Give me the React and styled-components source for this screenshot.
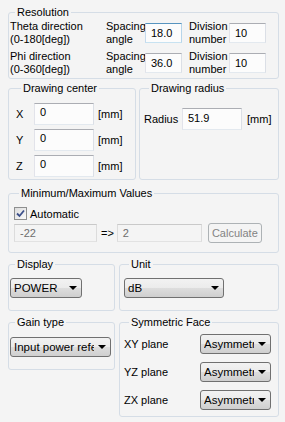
import styled, { createGlobalStyle } from "styled-components";

const GlobalStyle = createGlobalStyle`
  html, body {
    margin: 0;
    padding: 0;
    background: #f4f4f4;
  }
  body {
    font-family: "Liberation Sans", Arial, sans-serif;
    font-size: 11px;
    color: #000;
  }
`;

const Page = styled.div`
  width: 285px;
  box-sizing: border-box;
  padding: 5px 6px 0 8px;
  display: flex;
  flex-direction: column;
`;

const Row = styled.div`
  display: flex;
  gap: ${(p) => p.gap || 0}px;
  margin-top: ${(p) => p.top || 0}px;
  align-items: ${(p) => p.align || "stretch"};
`;

const Group = styled.fieldset`
  box-sizing: border-box;
  margin: 0;
  min-width: 0;
  width: ${(p) => (p.width ? `${p.width}px` : "auto")};
  flex: ${(p) => (p.width ? "none" : "1")};
  margin-top: ${(p) => p.top || 0}px;
  padding: ${(p) => p.pad || "0"};
  border: 1px solid #d5dde6;
  border-radius: 3px;
`;

const Legend = styled.legend`
  padding: 0 2px;
  margin-left: 5px;
  line-height: 15px;
  font-size: 11px;
`;

const ResGrid = styled.div`
  display: grid;
  grid-template-columns: 96px 39px 36px 8px 40px 36px;
  grid-auto-rows: 26px;
  row-gap: 4px;
  align-items: center;
`;

const TwoLine = styled.div`
  line-height: 13px;
  white-space: nowrap;
`;

const Field = styled.div`
  box-sizing: border-box;
  width: ${(p) => p.w}px;
  height: ${(p) => p.h || 20}px;
  border: 1px solid;
  border-color: ${(p) =>
    p.focused
      ? "#5794bf #b7d5ea #c7e2f1 #c5daed"
      : p.disabled
      ? "#c9c9c9 #dcdcdc #e2e2e2 #dcdcdc"
      : "#abadb3 #dbdfe6 #e3e9ef #e2e3ea"};
  background: ${(p) => (p.disabled ? "#f4f4f4" : "#fcfcfc")};
  color: ${(p) => (p.disabled ? "#6d6d6d" : "#000")};
  padding: 0 5px ${(p) => p.lift || 0}px;
  display: flex;
  align-items: center;
  white-space: nowrap;
`;

const FieldRow = styled.div`
  display: flex;
  align-items: center;
  height: ${(p) => p.h || 22}px;
  margin-top: ${(p) => p.top || 0}px;
`;

const Label = styled.span`
  flex: none;
  width: ${(p) => (p.w ? `${p.w}px` : "auto")};
  margin-left: ${(p) => p.ml || 0}px;
  white-space: nowrap;
`;

const Stack = styled.div`
  display: flex;
  flex-direction: column;
  gap: ${(p) => p.gap || 0}px;
`;

const Check = styled.div`
  display: flex;
  align-items: center;
  height: 13px;
  gap: 3px;
`;

const Box = styled.span`
  width: 13px;
  height: 13px;
  box-sizing: border-box;
  border: 1px solid #8e8f8f;
  background: linear-gradient(135deg, #dcdcdc, #fafafa);
  display: flex;
  align-items: center;
  justify-content: center;
`;

const Button = styled.div`
  box-sizing: border-box;
  width: ${(p) => p.w}px;
  height: 20px;
  margin-left: ${(p) => p.ml || 0}px;
  border: 1px solid #adb2b5;
  border-radius: 3px;
  background: #f4f4f4;
  color: #838383;
  display: flex;
  align-items: center;
  justify-content: center;
`;

const Select = styled.div`
  box-sizing: border-box;
  width: ${(p) => p.w}px;
  height: 20px;
  border: 1px solid #707070;
  border-radius: 3px;
  background: linear-gradient(#f2f2f2 0%, #ebebeb 50%, #dddddd 51%, #cfcfcf 100%);
  display: flex;
  align-items: center;
  padding: 0 4px 0 3px;
  font-size: 11.5px;
  overflow: hidden;
`;

const SelectText = styled.span`
  flex: 1;
  overflow: hidden;
  white-space: nowrap;
`;

const Arrow = styled.span`
  flex: none;
  width: 0;
  height: 0;
  margin-left: 4px;
  border-left: 4px solid transparent;
  border-right: 4px solid transparent;
  border-top: 4px solid #000;
`;

const Gap = styled.span`
  display: inline-block;
  width: ${(p) => p.w}px;
`;

function Dropdown({ w, value }) {
  return (
    <Select w={w}>
      <SelectText>{value}</SelectText>
      <Arrow />
    </Select>
  );
}

export default function App() {
  return (
    <>
      <GlobalStyle />
      <Page>
        <Group pad="0 0 2px 1px">
          <Legend>Resolution</Legend>
          <ResGrid>
            <TwoLine>
              Theta direction
              <br />
              (0-180[deg])
            </TwoLine>
            <TwoLine>
              Spacing
              <br />
              angle
            </TwoLine>
            <Field w={37} focused>18.0</Field>
            <span />
            <TwoLine>
              Division
              <br />
              number
            </TwoLine>
            <Field w={37}>10</Field>
            <TwoLine>
              Phi direction
              <br />
              (0-360[deg])
            </TwoLine>
            <TwoLine>
              Spacing
              <br />
              angle
            </TwoLine>
            <Field w={37}>36.0</Field>
            <span />
            <TwoLine>
              Division
              <br />
              number
            </TwoLine>
            <Field w={37}>10</Field>
          </ResGrid>
        </Group>

        <Row gap={3} top={2}>
          <Group width={128} pad="7px 0 2px 7px">
            <Legend>Drawing center</Legend>
            <Stack gap={4}>
              {["X", "Y", "Z"].map((axis) => (
                <FieldRow key={axis}>
                  <Label w={18}>{axis}</Label>
                  <Field w={60} h={22} lift={4}>
                    0
                  </Field>
                  <Label ml={4}>[mm]</Label>
                </FieldRow>
              ))}
            </Stack>
          </Group>
          <Group pad="12px 0 2px 4px">
            <Legend>Drawing radius</Legend>
            <FieldRow>
              <Label w={38}>Radius</Label>
              <Field w={60} h={22} lift={3}>
                51.9
              </Field>
              <Label ml={5}>[mm]</Label>
            </FieldRow>
          </Group>
        </Row>

        <Group top={6} pad="6px 0 9px 5px">
          <Legend>Minimum/Maximum Values</Legend>
          <Check>
            <Box>
              <svg width="9" height="9" viewBox="0 0 9 9">
                <path
                  d="M1 4.5 L3.5 7 L8 1.5"
                  fill="none"
                  stroke="#3b4f8a"
                  strokeWidth="1.8"
                />
              </svg>
            </Box>
            <span>Automatic</span>
          </Check>
          <FieldRow h={20} top={3}>
            <Field w={83} h={18} disabled>
              -22
            </Field>
            <Label ml={4}>=&gt;</Label>
            <Gap w={3} />
            <Field w={85} h={18} disabled>
              2
            </Field>
            <Button w={54} ml={6}>
              Calculate
            </Button>
          </FieldRow>
        </Group>

        <Row gap={4} top={4}>
          <Group width={107} pad="6px 0 12px 1px">
            <Legend>Display</Legend>
            <Dropdown w={72} value="POWER" />
          </Group>
          <Group pad="6px 0 12px 4px">
            <Legend>Unit</Legend>
            <Dropdown w={100} value="dB" />
          </Group>
        </Row>

        <Row gap={4} top={4} align="flex-start">
          <Group width={107} pad="7px 0 12px 1px">
            <Legend>Gain type</Legend>
            <Dropdown w={101} value="Input power reference" />
          </Group>
          <Group pad="4px 0 6px 4px">
            <Legend>Symmetric Face</Legend>
            <Stack gap={8}>
              {["XY plane", "YZ plane", "ZX plane"].map((plane) => (
                <FieldRow key={plane} h={20}>
                  <Label w={76}>{plane}</Label>
                  <Dropdown w={71} value="Asymmetric" />
                </FieldRow>
              ))}
            </Stack>
          </Group>
        </Row>
      </Page>
    </>
  );
}
